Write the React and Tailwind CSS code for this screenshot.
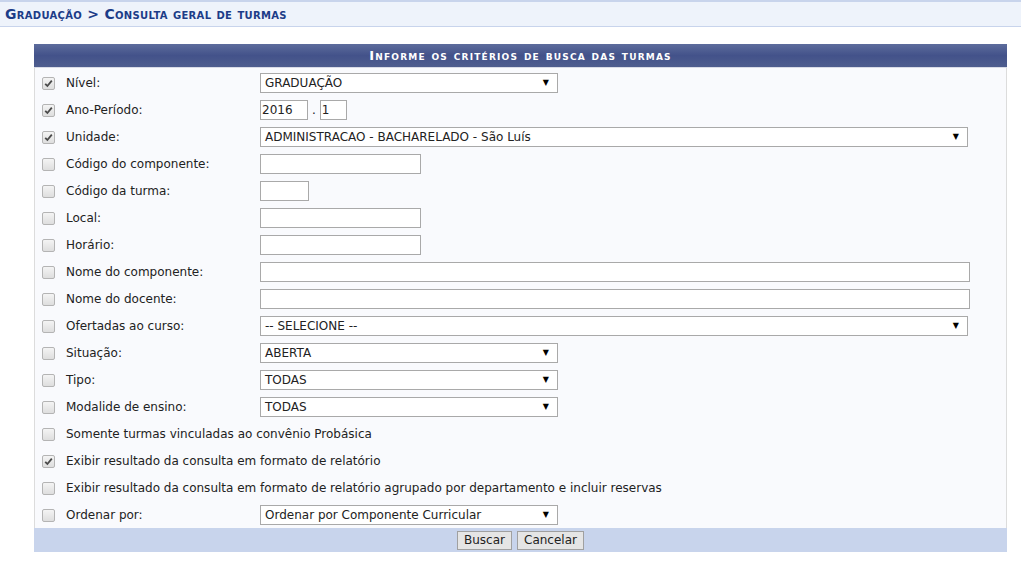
import React from 'react'

// caixa de seleção desenhada (o original usa o checkbox padrão do navegador)
const Check = ({ checked }) => (
  <span className="inline-flex h-[13px] w-[13px] items-center justify-center rounded-[2px] border border-[#b4b4b4] bg-gradient-to-b from-[#f4f4f4] to-[#dedede]">
    {checked && (
      <svg width="9" height="9" viewBox="0 0 9 9">
        <path d="M1.2 4.8 L3.4 7 L7.8 1.6" fill="none" stroke="#4a4a4a" strokeWidth="1.8" />
      </svg>
    )}
  </span>
)

const Select = ({ value, w }) => (
  <div className={`flex h-[20px] items-center justify-between border border-[#a9a9a9] bg-white pl-[4px] pr-[8px] ${w}`}>
    <span>{value}</span>
    <span className="text-[8px] leading-none text-black">▼</span>
  </div>
)

const Input = ({ w, value }) => (
  <div className={`flex h-[20px] items-center border border-[#a9a9a9] bg-white px-[1px] ${w}`}>
    {value}
  </div>
)

const rows = [
  { label: 'Nível:', checked: true, field: <Select value="GRADUAÇÃO" w="w-[298px]" /> },
  {
    label: 'Ano-Período:',
    checked: true,
    field: (
      <div className="flex items-center">
        <Input w="w-[48px]" value="2016" />
        <span className="px-[4px]">.</span>
        <Input w="w-[27px]" value="1" />
      </div>
    ),
  },
  { label: 'Unidade:', checked: true, field: <Select value="ADMINISTRACAO - BACHARELADO - São Luís" w="w-[708px]" /> },
  { label: 'Código do componente:', field: <Input w="w-[161px]" /> },
  { label: 'Código da turma:', field: <Input w="w-[49px]" /> },
  { label: 'Local:', field: <Input w="w-[161px]" /> },
  { label: 'Horário:', field: <Input w="w-[161px]" /> },
  { label: 'Nome do componente:', field: <Input w="w-[710px]" /> },
  { label: 'Nome do docente:', field: <Input w="w-[710px]" /> },
  { label: 'Ofertadas ao curso:', field: <Select value="-- SELECIONE --" w="w-[708px]" /> },
  { label: 'Situação:', field: <Select value="ABERTA" w="w-[298px]" /> },
  { label: 'Tipo:', field: <Select value="TODAS" w="w-[298px]" /> },
  { label: 'Modalide de ensino:', field: <Select value="TODAS" w="w-[298px]" /> },
  { label: 'Somente turmas vinculadas ao convênio Probásica', full: true },
  { label: 'Exibir resultado da consulta em formato de relatório', checked: true, full: true },
  { label: 'Exibir resultado da consulta em formato de relatório agrupado por departamento e incluir reservas', full: true },
  { label: 'Ordenar por:', field: <Select value="Ordenar por Componente Curricular" w="w-[298px]" /> },
]

export default function App() {
  return (
    <div className="min-h-[565px] bg-white text-[12px] text-[#222] font-['DejaVu_Sans',Verdana,sans-serif]">
      {/* barra do título */}
      <div className="h-[27px] border-t-[2px] border-b border-[#c8d4ec] bg-[#eef3fb] pl-[5px] pt-[5px]">
        <h2 className="text-[14px] font-bold leading-none tracking-[0.3px] text-[#1c3c88] [font-variant:small-caps]">
          Graduação &gt; Consulta geral de turmas
        </h2>
      </div>

      <div className="mx-[34px] mt-[17px] w-[973px]">
        <div className="flex h-[24px] items-center justify-center border-b border-[#d8dbe6] bg-gradient-to-b from-[#5d6c9c] via-[#43528a] to-[#4e5d8e] text-[13px] font-bold tracking-[1.2px] text-white [font-variant:small-caps]">
          Informe os critérios de busca das turmas
        </div>

        <div className="border-x border-[#dcdcdc] bg-[#f9fafd] pt-[1px]">
          {rows.map((r) => (
            <div key={r.label} className="flex h-[27px] items-center">
              <div className="flex w-[31px] justify-start pl-[7px] pt-[1px]">
                <Check checked={r.checked} />
              </div>
              {r.full ? (
                <span>{r.label}</span>
              ) : (
                <>
                  <span className="w-[194px]">{r.label}</span>
                  {r.field}
                </>
              )}
            </div>
          ))}
        </div>

        <div className="flex h-[24px] items-center justify-center gap-[5px] bg-[#c8d4ec] text-[12px]">
          <button className="h-[19px] border border-[#a0a0a0] bg-[#e5e5e5] px-[6px] leading-none">Buscar</button>
          <button className="h-[19px] border border-[#a0a0a0] bg-[#e5e5e5] px-[6px] leading-none">Cancelar</button>
        </div>
      </div>
    </div>
  )
}
